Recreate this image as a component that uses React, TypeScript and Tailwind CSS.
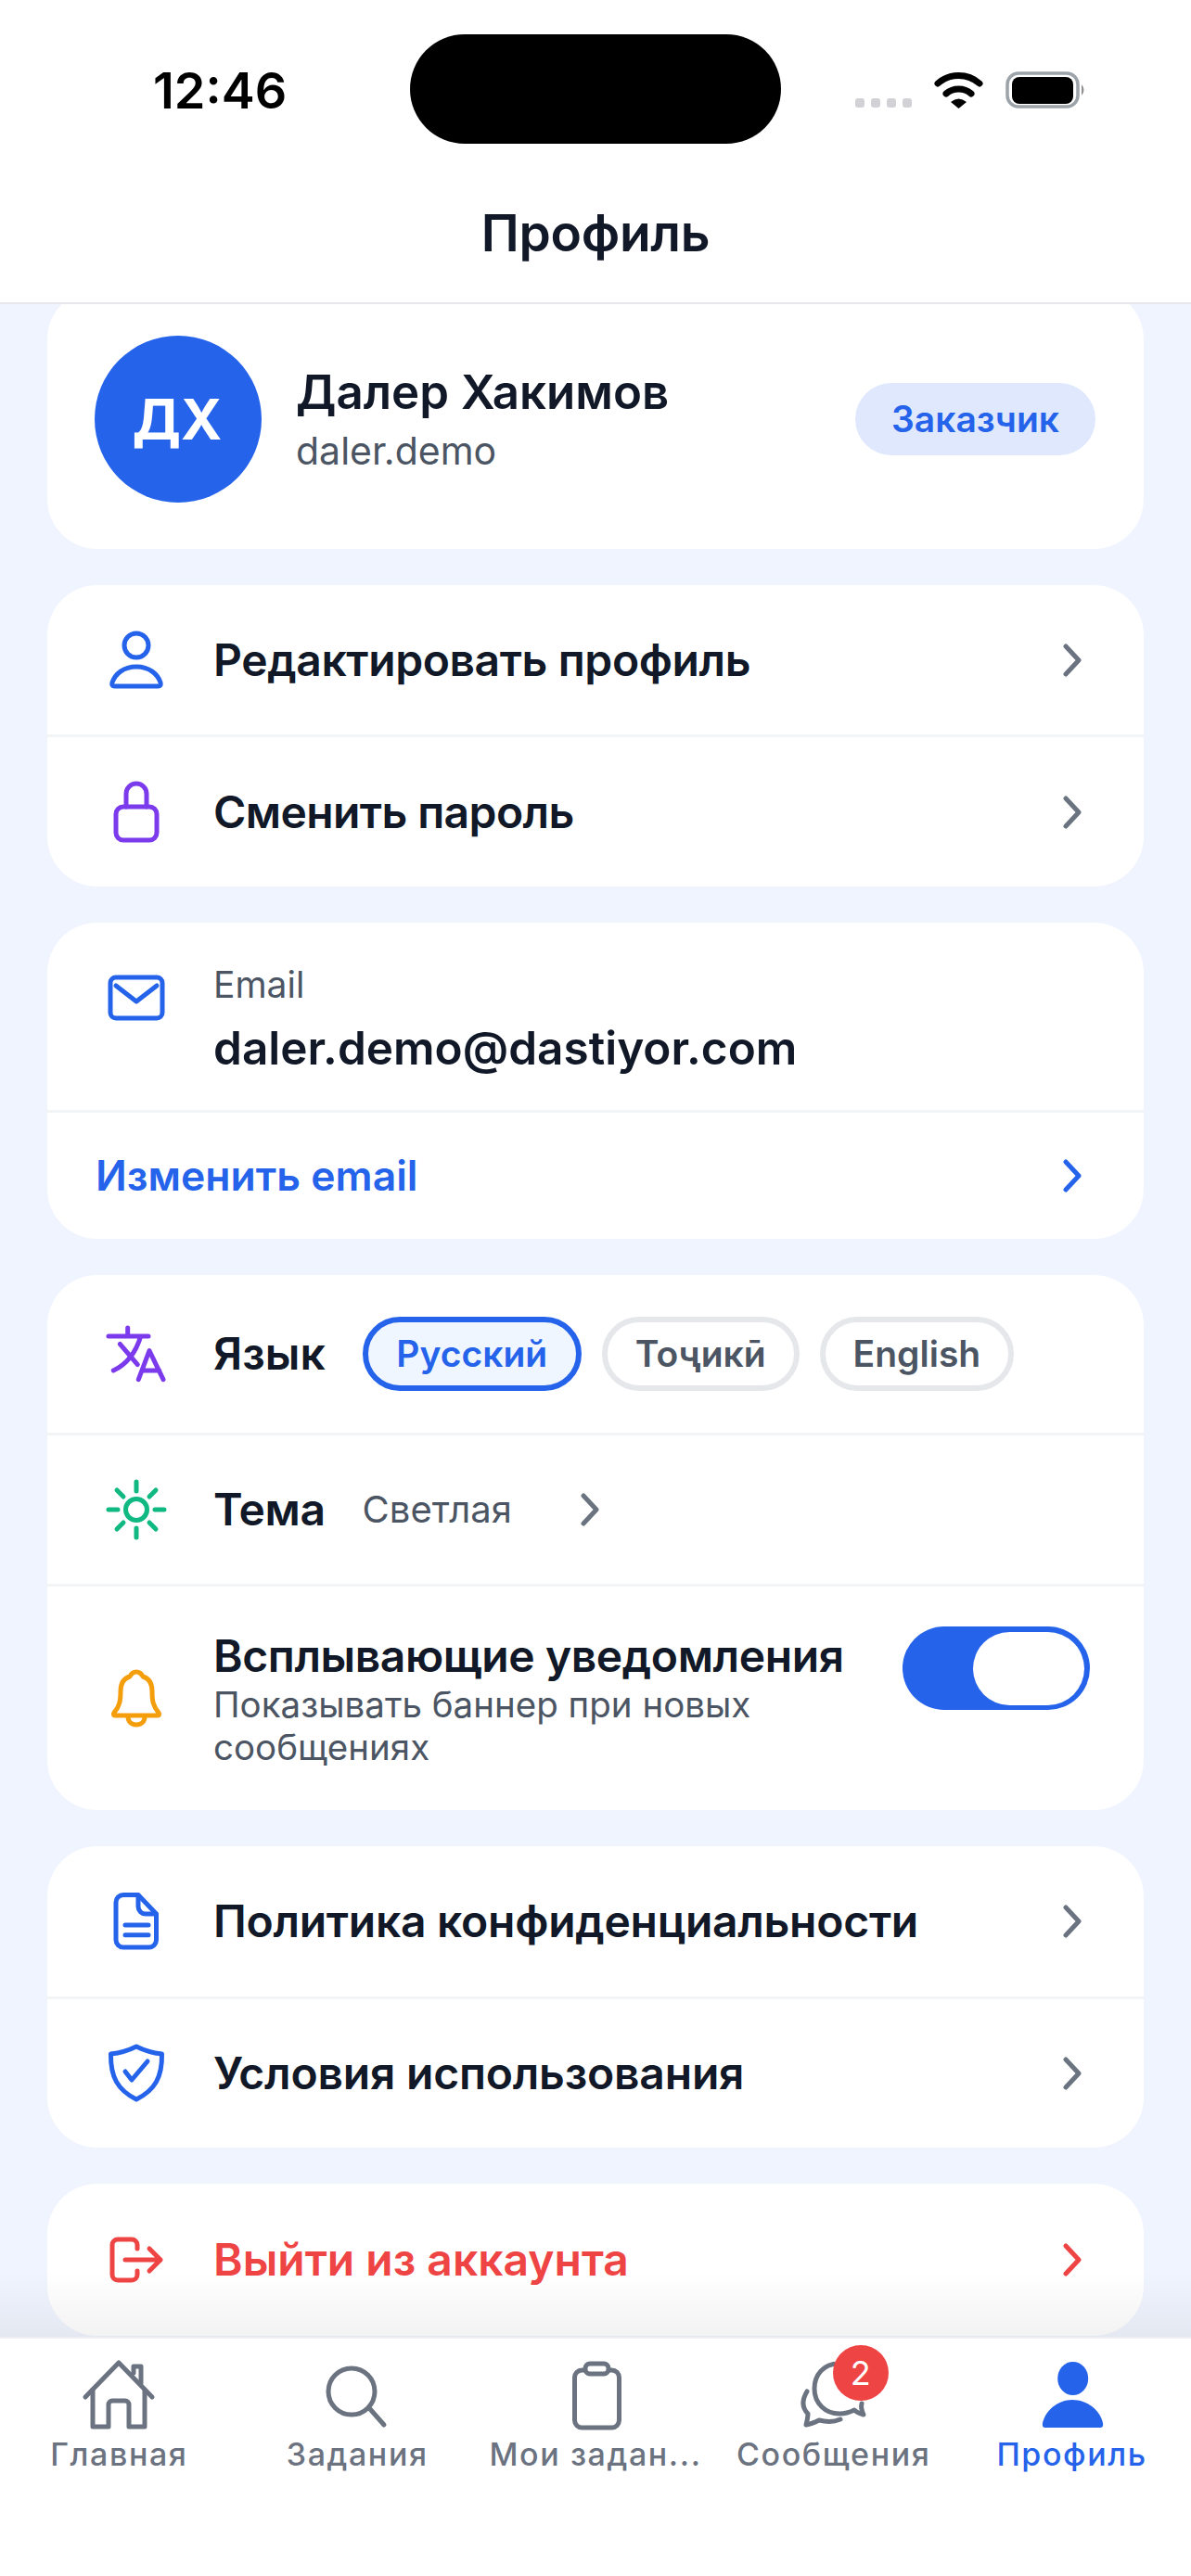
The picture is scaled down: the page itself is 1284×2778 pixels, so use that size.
import type { ReactNode } from 'react';

const FONT = "font-['Inter','Noto_Sans',sans-serif]";

function Glyph({ children, className = '', size = 72 }: { children: ReactNode; className?: string; size?: number }) {
  return (
    <svg
      width={size}
      height={size}
      viewBox={`0 0 ${size} ${size}`}
      fill="none"
      stroke="currentColor"
      strokeWidth={5}
      strokeLinecap="round"
      strokeLinejoin="round"
      className={`shrink-0 ${className}`}
    >
      {children}
    </svg>
  );
}

function Chevron({ className = 'text-[#6b7280]' }: { className?: string }) {
  return (
    <svg width="20" height="36" viewBox="0 0 20 36" fill="none" stroke="currentColor" strokeWidth={5} strokeLinecap="round" strokeLinejoin="round" className={`shrink-0 ${className}`}>
      <path d="M3 3 L17 18 L3 33" />
    </svg>
  );
}

function IconBox({ children }: { children: ReactNode }) {
  return <div className="w-[90px] mr-[38px] shrink-0 flex justify-center">{children}</div>;
}

function Divider() {
  return <div className="h-[3px] bg-[#f3f4f6] shrink-0" />;
}

function Card({ children, className = '' }: { children: ReactNode; className?: string }) {
  return <section className={`bg-white rounded-[54px] shrink-0 overflow-hidden ${className}`}>{children}</section>;
}

function NavRow({ icon, label, height, tone = 'text-[#111827]', chevron, tracking = 'tracking-[-0.4px]' }: { icon: ReactNode; label: string; height: string; tone?: string; chevron?: string; tracking?: string }) {
  return (
    <div className={`flex items-center pl-[51px] pr-[67px] ${height}`}>
      <IconBox>{icon}</IconBox>
      <span className={`flex-1 text-[48px] leading-[60px] font-semibold ${tracking} ${tone}`}>{label}</span>
      <Chevron className={chevron} />
    </div>
  );
}

const PersonIcon = (
  <Glyph className="text-[#2563eb]">
    <circle cx="36" cy="20" r="13" />
    <path d="M36 43 C50 43 59 51 62 60 Q63 64 60 64 L12 64 Q9 64 10 60 C13 51 22 43 36 43 Z" />
  </Glyph>
);

const LockIcon = (
  <Glyph className="text-[#7c3aed]">
    <rect x="14" y="30" width="44" height="36" rx="8" />
    <path d="M25 30 V16 a11 11 0 0 1 22 0 V30" />
  </Glyph>
);

const MailIcon = (
  <Glyph className="text-[#2563eb]">
    <rect x="8" y="14" width="56" height="44" rx="6" />
    <path d="M14 23 L36 40 L58 23" />
  </Glyph>
);

const TranslateIcon = (
  <Glyph className="text-[#7c3aed]">
    <path d="M6 17 H49 M26.7 8 V17 M40.7 17 C36 33 26 47 11.3 54 M18.3 25.3 L37.3 47.7" />
    <path d="M38.3 63.7 L50 32.7 L65 63.7 M42.3 54 H60.7" />
  </Glyph>
);

const SunIcon = (
  <Glyph className="text-[#10b981]">
    <circle cx="36" cy="36" r="11.5" />
    <path d="M36 6 V16 M36 56 V66 M6 36 H16 M56 36 H66 M15 15 L22 22 M50 50 L57 57 M57 15 L50 22 M22 50 L15 57" />
  </Glyph>
);

const BellIcon = (
  <Glyph className="text-[#f59e0b]">
    <path d="M36 7 C40 7 42 10 43 12 C50 14 53 20 53 28 C53 38 54 44 60 51 Q62 54 58 54 L14 54 Q10 54 12 51 C18 44 19 38 19 28 C19 20 22 14 29 12 C30 10 32 7 36 7 Z" />
    <path d="M27 55 C27 61 31 64 36 64 C41 64 45 61 45 55" />
  </Glyph>
);

const FileIcon = (
  <Glyph className="text-[#2563eb]">
    <path d="M22 7.5 H38 L57.5 28 V56 a8 8 0 0 1 -8 8 H22 a8 8 0 0 1 -8 -8 V15.5 a8 8 0 0 1 8 -8 Z" />
    <path d="M38 8 V20 a8 8 0 0 0 8 8 H57" />
    <path d="M24 40 H49 M24 50.7 H49" />
  </Glyph>
);

const ShieldIcon = (
  <Glyph className="text-[#2563eb]">
    <path d="M36 7 C44 11 54 14 63.5 15 C64 40 56 54 36 64 C16 54 8 40 8.5 15 C18 14 28 11 36 7 Z" />
    <path d="M24 34 L31 43 L48 23" />
  </Glyph>
);

const LogoutIcon = (
  <Glyph className="text-[#ef4444]">
    <path d="M37 24 V20 a6 6 0 0 0 -6 -6 H16 a6 6 0 0 0 -6 6 V52 a6 6 0 0 0 6 6 H31 a6 6 0 0 0 6 -6 V48" />
    <path d="M24 36 H62 M50 24 L62 36 L50 48" />
  </Glyph>
);

function StatusBar() {
  return (
    <div className="h-[194px] relative flex items-center justify-between pl-[165px] pr-[113px]">
      <span className="text-[54px] font-semibold text-black">12:46</span>
      {/* dynamic island */}
      <div className="absolute left-[442px] top-[37px] w-[400px] h-[118px] rounded-[59px] bg-black" />
      <div className="flex items-start">
        <div className="flex gap-[7px] mt-[29px] mr-[24px]">
          <span className="w-[10px] h-[10px] rounded-[3px] bg-[#d1d1d6]" />
          <span className="w-[10px] h-[10px] rounded-[3px] bg-[#d1d1d6]" />
          <span className="w-[10px] h-[10px] rounded-[3px] bg-[#d1d1d6]" />
          <span className="w-[10px] h-[10px] rounded-[3px] bg-[#d1d1d6]" />
        </div>
        <svg width="53" height="40" viewBox="0 0 53 40" fill="none" stroke="black" strokeWidth={7} strokeLinecap="round" className="mr-[24px]">
          <path d="M4 13 A34 34 0 0 1 49 13" />
          <path d="M13 24 A21 21 0 0 1 40 24" />
          <path d="M18 33 Q26.5 26 35 33 L26.5 40 Z" fill="black" stroke="none" />
        </svg>
        <svg width="87" height="40" viewBox="0 0 87 40">
          <rect x="2" y="2" width="76" height="36" rx="12" fill="none" stroke="#9ca3a9" strokeWidth={3.5} />
          <rect x="7" y="6" width="66" height="29" rx="8" fill="black" />
          <path d="M82 14 Q87 20 82 26 Z" fill="#8e8e93" />
        </svg>
      </div>
    </div>
  );
}

function LangPill({ label, active }: { label: string; active?: boolean }) {
  return (
    <div
      className={`h-[80px] rounded-full border-[6px] flex items-center text-[39px] font-semibold ${
        active ? 'w-[236px] justify-center border-[#2563eb] bg-[#eff6ff] text-[#2563eb]' : 'px-[30px] border-[#e5e7eb] bg-white text-[#4b5563]'
      }`}
    >
      {label}
    </div>
  );
}

function Tab({ icon, label, active, badge }: { icon: ReactNode; label: string; active?: boolean; badge?: string }) {
  return (
    <div className="flex flex-col items-center pt-[21px]">
      <div className="relative w-[80px] h-[80px]">
        {icon}
        {badge && (
          <span className="absolute left-[39px] top-[-14px] w-[60px] h-[60px] rounded-full bg-[#ef4444] text-white text-[36px] flex items-center justify-center">
            {badge}
          </span>
        )}
      </div>
      <span className={`mt-[4px] text-[34px] leading-[40px] font-medium tracking-[1.6px] whitespace-nowrap ${active ? 'text-[#2563eb]' : 'text-[#6b7280]'}`}>
        {label}
      </span>
    </div>
  );
}

export default function App() {
  return (
    <div className={`w-[1284px] h-[2778px] flex flex-col overflow-hidden bg-[#f0f4fe] ${FONT}`}>
      <header className="h-[328px] shrink-0 bg-white border-b-[2px] border-[#e5e7eb] relative z-10">
        <StatusBar />
        <h1 className="h-[114px] flex items-center justify-center text-[55px] font-semibold tracking-[-0.3px] text-[#111827]">Профиль</h1>
      </header>

      <main className="flex-1 min-h-0 relative overflow-hidden px-[51px] flex flex-col gap-[39px]">
        <Card className="-mt-[16px] h-[280px] flex items-center pl-[51px] pr-[52px]">
          <div className="w-[180px] h-[180px] rounded-full bg-[#2563eb] text-white text-[60px] font-bold flex items-center justify-center shrink-0 pr-[2px]">
            ДХ
          </div>
          <div className="flex-1 ml-[37px]">
            <div className="text-[51px] leading-[62px] font-semibold text-[#111827]">Далер Хакимов</div>
            <div className="text-[41px] leading-[52px] mt-[6px] text-[#4b5563]">daler.demo</div>
          </div>
          <div className="h-[78px] px-[39px] rounded-full bg-[#dfe8fc] text-[#2563eb] text-[39px] font-semibold flex items-center">Заказчик</div>
        </Card>

        <Card>
          <NavRow icon={PersonIcon} label="Редактировать профиль" height="h-[161px]" />
          <Divider />
          <NavRow icon={LockIcon} label="Сменить пароль" height="h-[161px]" tracking="tracking-[-0.6px]" />
        </Card>

        <Card>
          <div className="h-[202px] flex pl-[51px] pt-[45px]">
            <IconBox>{MailIcon}</IconBox>
            <div>
              <div className="text-[39px] leading-[44px] text-[#4b5563]">Email</div>
              <div className="mt-[15px] text-[49.5px] leading-[62px] font-semibold text-[#111827]">daler.demo@dastiyor.com</div>
            </div>
          </div>
          <Divider />
          <div className="h-[136px] flex items-center justify-between pl-[52px] pr-[67px]">
            <span className="text-[44.5px] font-semibold text-[#2563eb]">Изменить email</span>
            <Chevron className="text-[#2563eb]" />
          </div>
        </Card>

        <Card>
          <div className="h-[170px] flex items-center pl-[51px]">
            <IconBox>{TranslateIcon}</IconBox>
            <span className="text-[48px] font-semibold text-[#111827] mr-[40px]">Язык</span>
            <div className="flex gap-[22px]">
              <LangPill label="Русский" active />
              <LangPill label="Тоҷикӣ" />
              <LangPill label="English" />
            </div>
          </div>
          <Divider />
          <div className="h-[160px] flex items-center pl-[51px]">
            <IconBox>{SunIcon}</IconBox>
            <span className="text-[48px] font-semibold tracking-[-0.4px] text-[#111827] mr-[40px]">Тема</span>
            <span className="text-[40px] text-[#4b5563] mr-[74px]">Светлая</span>
            <Chevron />
          </div>
          <Divider />
          <div className="h-[241px] flex items-center pl-[51px] pr-[58px]">
            <IconBox>{BellIcon}</IconBox>
            <div className="flex-1 min-w-0">
              <div className="text-[48px] leading-[58px] font-semibold tracking-[-0.4px] text-[#111827] whitespace-nowrap">Всплывающие уведомления</div>
              <div className="text-[38.5px] leading-[46px] text-[#4b5563] w-[640px]">Показывать баннер при новых сообщениях</div>
            </div>
            <div className="w-[202px] h-[90px] -mt-[65px] rounded-full bg-[#2563eb] flex items-center justify-end pr-[6px] shrink-0">
              <div className="w-[120px] h-[79px] rounded-full bg-white" />
            </div>
          </div>
        </Card>

        <Card>
          <NavRow icon={FileIcon} label="Политика конфиденциальности" height="h-[162px]" tracking="tracking-[-0.27px]" />
          <Divider />
          <NavRow icon={ShieldIcon} label="Условия использования" height="h-[160px]" tracking="tracking-[-0.2px]" />
        </Card>

        <Card>
          <NavRow icon={LogoutIcon} label="Выйти из аккаунта" height="h-[164px]" tone="text-[#ef4444]" chevron="text-[#ef4444]" tracking="tracking-[0px]" />
        </Card>

        {/* fade above the tab bar */}
        <div className="absolute left-0 right-0 bottom-0 h-[70px] bg-gradient-to-b from-transparent to-[#000000]/[0.05]" />
      </main>

      <nav className="h-[258px] shrink-0 bg-white grid grid-cols-5 border-t-[2px] border-[#eef0f4]">
        <Tab
          label="Главная"
          icon={
            <Glyph size={80} className="text-[#6b7280]">
              <path d="M4 42 L40 5 L76 42" />
              <path d="M12 34 V74 H29 V50 a4 4 0 0 1 4 -4 H47 a4 4 0 0 1 4 4 V74 H68 V34" />
              <path d="M56 16 V9 H64 V27" />
            </Glyph>
          }
        />
        <Tab
          label="Задания"
          icon={
            <Glyph size={80} className="text-[#6b7280]">
              <circle cx="34" cy="36" r="25" />
              <path d="M54 55 L69 72" />
            </Glyph>
          }
        />
        <Tab
          label="Мои задан..."
          icon={
            <Glyph size={80} className="text-[#6b7280]">
              <rect x="17.5" y="13" width="48" height="62" rx="8" />
              <rect x="29" y="6" width="25" height="11" rx="5" fill="white" />
            </Glyph>
          }
        />
        <Tab
          label="Сообщения"
          badge="2"
          icon={
            <Glyph size={80} className="text-[#6b7280]">
              <path d="M45 6 C29 6 19 18 19 33 C19 49 31 60 46 60 C52 60 58 58 62 56 C65 59 68 60 72 61 C70 57 69 53 70 49" />
              <path d="M11 36 C5 46 6 54 12 60 C12 64 11 68 10 72 C16 71 20 69 24 67 C32 69 40 69 47 66" />
            </Glyph>
          }
        />
        <Tab
          label="Профиль"
          active
          icon={
            <svg width="80" height="80" viewBox="0 0 80 80" fill="#2563eb">
              <ellipse cx="40.7" cy="22" rx="16.5" ry="18" />
              <path d="M40 45 C56 45 70 56 73 70 Q74 75 70 75 L11 75 Q7 75 8 70 C11 56 25 45 40 45 Z" />
            </svg>
          }
        />
      </nav>
    </div>
  );
}
